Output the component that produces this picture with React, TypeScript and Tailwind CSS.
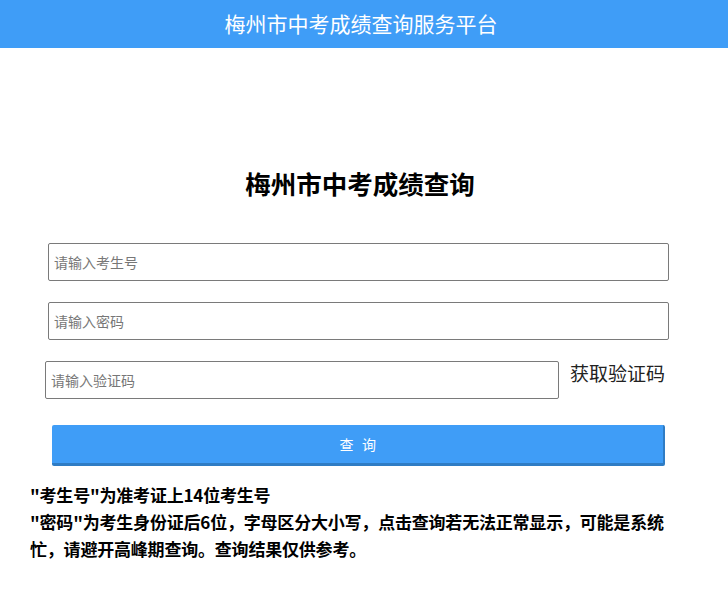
const font = {
  fontFamily: '"Noto Sans CJK SC", "Noto Sans", sans-serif',
};

const inputClass =
  "h-[38px] rounded-[2px] border border-[#7a7a7a] bg-white px-[5px] text-[14px] text-[#333] outline-none placeholder:text-[#777]";

export default function App() {
  return (
    <div className="min-h-[605px] bg-white" style={font}>
      <header className="flex h-[48px] items-center justify-center bg-[#3f9df7] pr-[6px] text-[21px] text-white">
        梅州市中考成绩查询服务平台
      </header>

      <main className="w-[728px]">
        <h1 className="mt-[118px] pr-[8px] text-center text-[25.5px] font-bold leading-[34px] text-black">
          梅州市中考成绩查询
        </h1>

        <form className="ml-[48px] mt-[43px] flex w-[621px] flex-col">
          <input className={inputClass} placeholder="请输入考生号" />
          <input className={`${inputClass} mt-[21px]`} placeholder="请输入密码" type="password" />
          <div className="mt-[21px] ml-[-3px] flex items-center">
            <input className={`${inputClass} w-[514px]`} placeholder="请输入验证码" />
            <span className="ml-[11px] mt-[-14px] text-[19px] text-[#222]">获取验证码</span>
          </div>
          <button
            type="button"
            className="ml-[4px] mt-[26px] h-[41px] w-[613px] rounded-[2px] border-b-[3px] border-r-[2px] border-[#2f7cc4] bg-[#3f9df7] pl-[9px] text-[14px] tracking-[0.6em] text-white"
          >
            查询
          </button>
        </form>

        <div className="ml-[30px] mt-[15px] w-[652px] text-[17px] font-bold leading-[27px] tracking-[-0.2px] text-black">
          <p>"考生号"为准考证上14位考生号</p>
          <p>
            "密码"为考生身份证后6位，字母区分大小写，点击查询若无法正常显示，可能是系统忙，请避开高峰期查询。查询结果仅供参考。
          </p>
        </div>
      </main>
    </div>
  );
}
